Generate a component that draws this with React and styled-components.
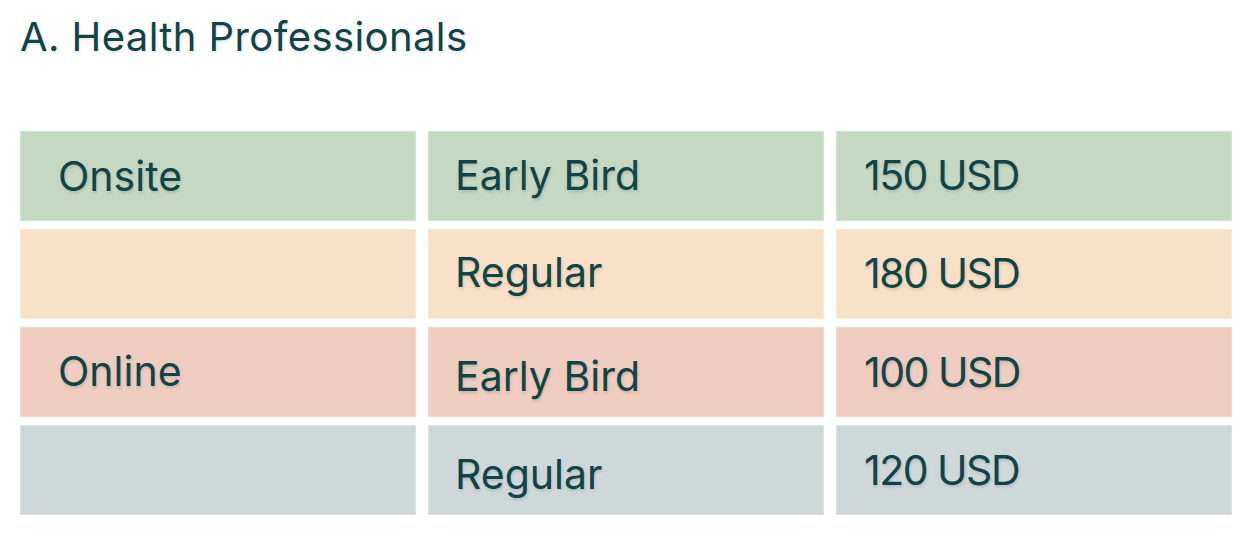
import React from "react";
import styled, { createGlobalStyle } from "styled-components";

const GlobalStyle = createGlobalStyle`
  html, body { margin: 0; padding: 0; background: #ffffff; }
  body { font-family: "Inter", "Noto Sans", sans-serif; color: #114446; }
`;

const Page = styled.main`
  padding: 12px 19px 0 20px;
`;

const Title = styled.h2`
  margin: 0 0 70px 0;
  font-family: "Inter", "Noto Sans", sans-serif;
  font-weight: 400;
  font-size: 40px;
  line-height: normal;
  letter-spacing: 0.4px;
  color: #114446;
  text-shadow: 1px 2px 3px rgba(0, 0, 0, 0.1);
`;

const Table = styled.div`
  display: grid;
  grid-template-columns: repeat(3, 1fr);
  grid-auto-rows: 90px;
  column-gap: 12px;
  row-gap: 8px;
  width: 1212px;
`;

const tones = {
  green: "#c5d8c4",
  peach: "#f8e0c7",
  rose: "#eecdc0",
  slate: "#cfd8d9",
};

const Cell = styled.div`
  display: flex;
  align-items: center;
  box-sizing: border-box;
  background: ${(p) => tones[p.$tone]};
  border: 1px solid rgba(255, 255, 255, 0.25);
  padding-left: ${(p) => p.$indent}px;
  padding-top: ${(p) => (p.$dy > 0 ? p.$dy * 2 : 0)}px;
  padding-bottom: ${(p) => (p.$dy < 0 ? -p.$dy * 2 : 0)}px;
  font-family: "Inter", "Noto Sans", sans-serif;
  font-size: 41px;
  font-weight: 400;
  line-height: normal;
  letter-spacing: ${(p) => (p.$price ? -1.5 : 0)}px;
  color: #114446;
  text-shadow: 1px 2px 3px rgba(0, 0, 0, 0.12);
  white-space: nowrap;
`;

const indents = [37, 26, 27];

const rows = [
  { tone: "green", cells: [["Onsite", -0.5], ["Early Bird", -1], ["150 USD", -1.5]] },
  { tone: "peach", cells: [["", 0], ["Regular", -2], ["180 USD", -1.5]] },
  { tone: "rose", cells: [["Online", -1], ["Early Bird", 4], ["100 USD", -0.5]] },
  { tone: "slate", cells: [["", 0], ["Regular", 4], ["120 USD", -0.5]] },
];

export default function App() {
  return (
    <Page>
      <GlobalStyle />
      <Title>A. Health Professionals</Title>
      <Table>
        {rows.map((row, r) =>
          row.cells.map(([text, dy], c) => (
            <Cell
              key={`${r}-${c}`}
              $tone={row.tone}
              $indent={indents[c]}
              $price={c === 2}
              $dy={dy}
            >
              {text}
            </Cell>
          ))
        )}
      </Table>
    </Page>
  );
}
